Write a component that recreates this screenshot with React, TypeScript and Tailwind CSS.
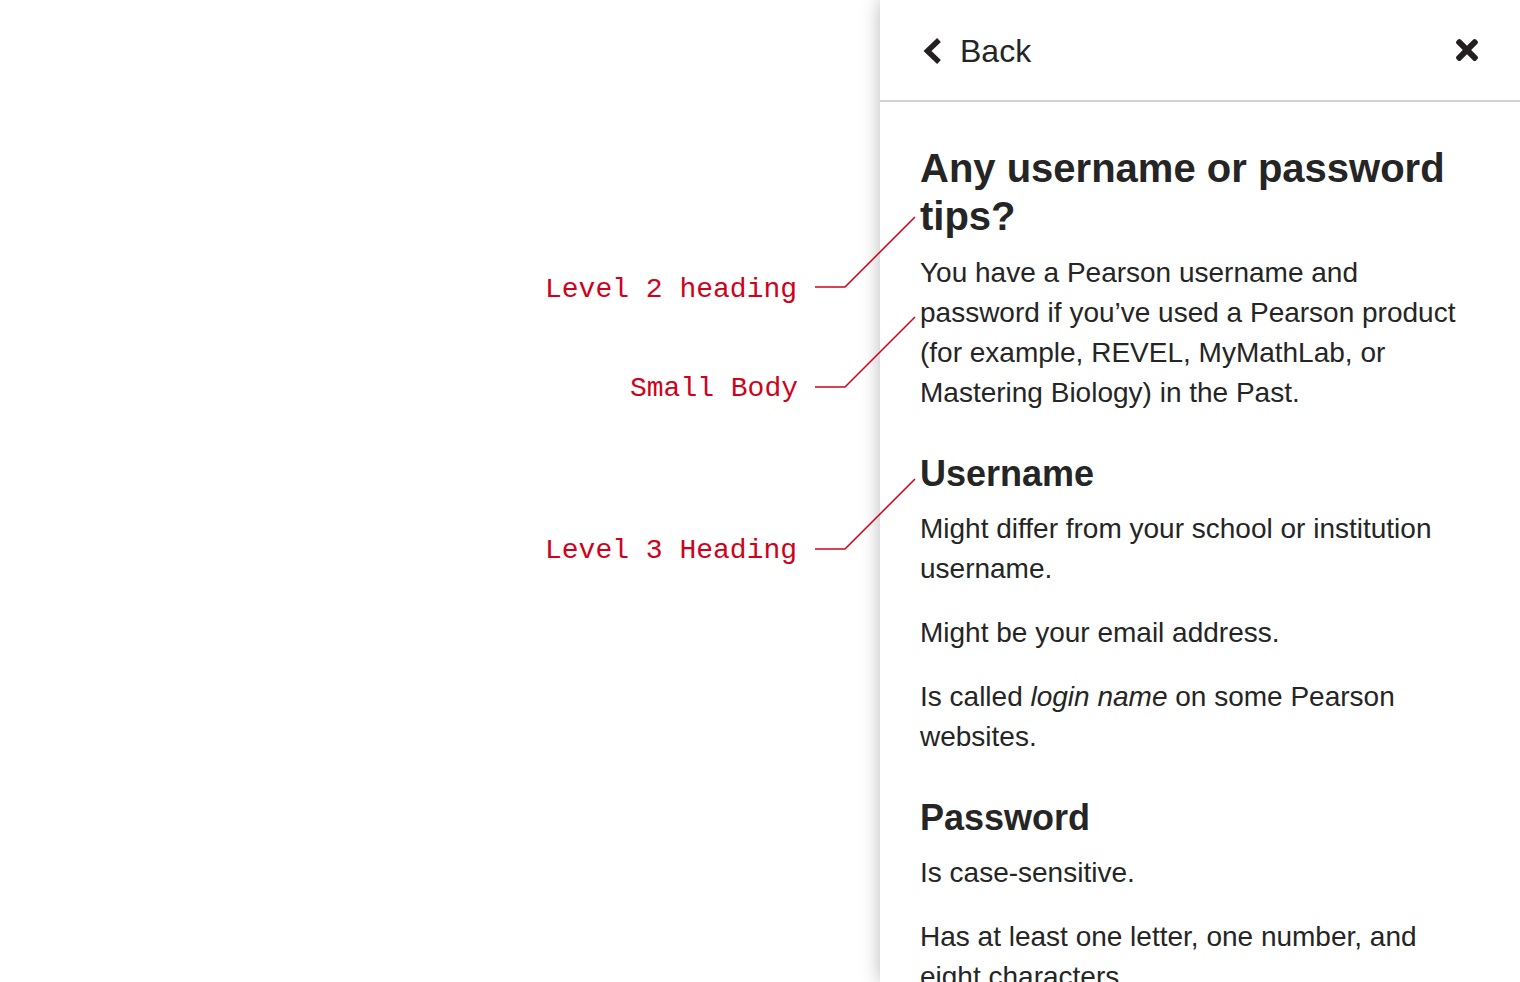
import React from 'react';

const labels = [
  { text: 'Level 2 heading', left: 545, top: 276, y: 287, toY: 217 },
  { text: 'Small Body', left: 630, top: 375, y: 387, toY: 317 },
  { text: 'Level 3 Heading', left: 545, top: 537, y: 549, toY: 479 },
];

function ChevronLeft() {
  return (
    <svg width="20" height="28" viewBox="0 0 20 28" className="shrink-0">
      <path d="M17 3 L5.5 14 L17 25" fill="none" stroke="#231f20" strokeWidth="5.5" strokeLinejoin="miter" />
    </svg>
  );
}

function CloseIcon() {
  return (
    <svg width="22" height="22" viewBox="0 80 352 352">
      <path
        fill="#231f20"
        d="M242.72 256l100.07-100.07c12.28-12.28 12.28-32.19 0-44.48l-22.24-22.24c-12.28-12.28-32.19-12.28-44.48 0L176 189.28 75.930 89.21c-12.28-12.28-32.19-12.28-44.48 0L9.21 111.45c-12.28 12.28-12.28 32.19 0 44.48L109.28 256 9.21 356.07c-12.28 12.28-12.28 32.19 0 44.48l22.24 22.24c12.28 12.28 32.2 12.28 44.48 0L176 322.72l100.07 100.07c12.28 12.28 32.2 12.28 44.48 0l22.24-22.24c12.28-12.28 12.28-32.19 0-44.48L242.72 256z"
      />
    </svg>
  );
}

export default function App() {
  return (
    <div className="relative flex h-[982px] w-full overflow-hidden bg-white font-['Liberation_Sans',Arial,sans-serif] text-[#252525]">
      {/* empty page area */}
      <div className="flex-1" />

      {/* side panel */}
      <aside className="w-[640px] shrink-0 bg-white shadow-[0_0_18px_rgba(0,0,0,0.28)]">
        <header className="flex h-[102px] items-center justify-between border-b-2 border-[#d2d2d2] pl-[42px] pr-[42px]">
          <button className="flex items-center gap-[18px] pt-[1px]">
            <ChevronLeft />
            <span className="text-[32px] leading-none">Back</span>
          </button>
          <button aria-label="Close">
            <CloseIcon />
          </button>
        </header>

        <div className="px-10 pt-[42px]">
          <h2 className="text-[40px] font-bold leading-[48px]">Any username or password tips?</h2>
          <p className="mt-[13px] text-[28px] leading-10">
            You have a Pearson username and password if you’ve used a Pearson product (for example, REVEL, MyMathLab,
            or Mastering Biology) in the Past.
          </p>

          <h3 className="mt-[38px] text-[36px] font-bold leading-[46px]">Username</h3>
          <p className="mt-3 text-[28px] leading-10">Might differ from your school or institution username.</p>
          <p className="mt-6 text-[28px] leading-10">Might be your email address.</p>
          <p className="mt-6 text-[28px] leading-10">
            Is called <em>login name</em> on some Pearson websites.
          </p>

          <h3 className="mt-[38px] text-[36px] font-bold leading-[46px]">Password</h3>
          <p className="mt-3 text-[28px] leading-10">Is case-sensitive.</p>
          <p className="mt-6 text-[28px] leading-10">Has at least one letter, one number, and eight characters.</p>
        </div>
      </aside>

      {/* annotation callouts */}
      <svg className="pointer-events-none absolute inset-0 z-10" width="1520" height="982">
        {labels.map((l) => (
          <polyline
            key={l.text}
            points={`815,${l.y} 845,${l.y} ${845 + (l.y - l.toY)},${l.toY}`}
            fill="none"
            stroke="#d0021b"
            strokeWidth="1.5"
          />
        ))}
      </svg>
      {labels.map((l) => (
        <span
          key={l.text}
          className="absolute z-10 whitespace-pre font-['Liberation_Mono','Courier_New',monospace] text-[28px] leading-[28px] text-[#d0021b]"
          style={{ left: l.left, top: l.top }}
        >
          {l.text}
        </span>
      ))}
    </div>
  );
}
